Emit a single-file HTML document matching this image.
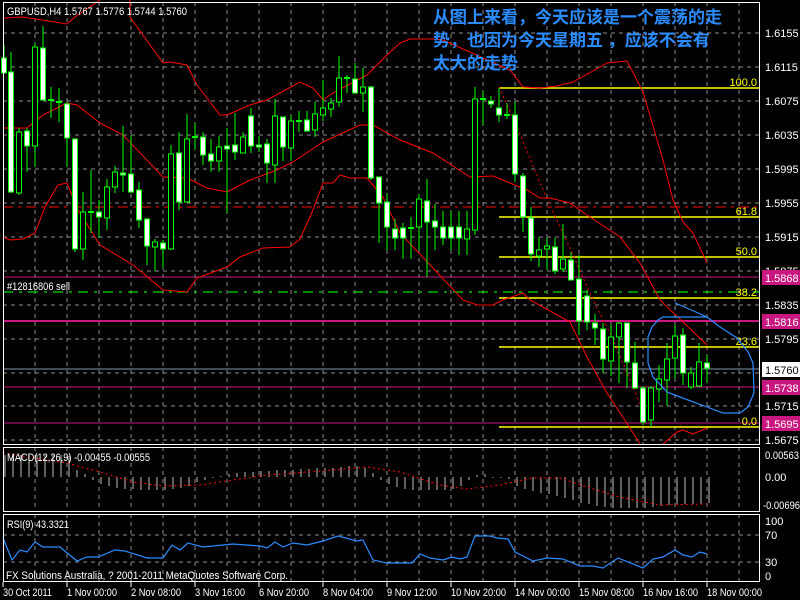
<!DOCTYPE html>
<html><head><meta charset="utf-8"><style>
html,body{margin:0;padding:0;background:#000;width:800px;height:600px;overflow:hidden}
svg{display:block}
text{font-family:"Liberation Sans",sans-serif;font-size:11px;fill:#fff}
.cn{font-family:"Liberation Sans","Noto Sans CJK SC",sans-serif;font-size:17px;font-weight:bold;fill:#2a8cff}
.g{stroke:#8c8c8c;stroke-width:1;stroke-dasharray:4,4;fill:none}
.y{stroke:#ffff00;stroke-width:1.5}
.yt{fill:#ffff00;text-anchor:end}
.m{stroke:#c8177f}
.w line{stroke:#00ff00;stroke-width:1}
.w rect{stroke:#00ff00;stroke-width:1}
</style></head><body>
<svg width="800" height="600" viewBox="0 0 800 600" xmlns="http://www.w3.org/2000/svg">
<g class="g">
<path d="M35 2V445M67 2V445M99 2V445M131 2V445M163 2V445M195 2V445M227 2V445M259 2V445M291 2V445M323 2V445M355 2V445M387 2V445M419 2V445M451 2V445M483 2V445M515 2V445M547 2V445M579 2V445M611 2V445M643 2V445M675 2V445M707 2V445M739 2V445"/>
<path d="M35 447V512M67 447V512M99 447V512M131 447V512M163 447V512M195 447V512M227 447V512M259 447V512M291 447V512M323 447V512M355 447V512M387 447V512M419 447V512M451 447V512M483 447V512M515 447V512M547 447V512M579 447V512M611 447V512M643 447V512M675 447V512M707 447V512M739 447V512"/>
<path d="M35 514V582M67 514V582M99 514V582M131 514V582M163 514V582M195 514V582M227 514V582M259 514V582M291 514V582M323 514V582M355 514V582M387 514V582M419 514V582M451 514V582M483 514V582M515 514V582M547 514V582M579 514V582M611 514V582M643 514V582M675 514V582M707 514V582M739 514V582"/>
<path d="M3 33H760M3 67H760M3 101H760M3 135H760M3 169H760M3 203H760M3 237H760M3 271H760M3 305H760M3 339H760M3 373H760M3 406H760M3 440H760"/>
<path d="M3 535H760M3 562H760"/>
</g>
<line x1="3" y1="207" x2="760" y2="207" stroke="#ff0000" stroke-dasharray="10,5,3,5"/>
<line x1="3" y1="277" x2="760" y2="277" class="m" stroke-width="1"/>
<line x1="3" y1="292" x2="760" y2="292" stroke="#00dd00" stroke-width="1.2" stroke-dasharray="10,6,3,6"/>
<line x1="3" y1="321" x2="760" y2="321" class="m" stroke-width="2"/>
<line x1="3" y1="369" x2="760" y2="369" stroke="#7f96aa"/>
<line x1="3" y1="387" x2="760" y2="387" class="m"/>
<line x1="3" y1="423" x2="760" y2="423" class="m"/>
<g class="y">
<line x1="499" y1="88" x2="760" y2="88"/><line x1="499" y1="217" x2="760" y2="217"/><line x1="499" y1="257" x2="760" y2="257"/><line x1="499" y1="298" x2="760" y2="298"/><line x1="499" y1="347" x2="760" y2="347"/><line x1="499" y1="427" x2="760" y2="427"/>
</g>
<text class="yt" x="757" y="86">100.0</text><text class="yt" x="757" y="215">61.8</text><text class="yt" x="757" y="255">50.0</text><text class="yt" x="757" y="296">38.2</text><text class="yt" x="757" y="345">23.6</text><text class="yt" x="757" y="425">0.0</text>
<g fill="none" stroke="#ff0000" stroke-width="1">
<polyline points="3,18 23,17 67,24 75,17 100,0"/>
<polyline points="130,0 130,17 163,63 170,62 187,65 197,85 220,115 227,115 250,105 267,100 300,82 313,88 323,100 333,93 367,75 387,55 400,43 410,39 433,39 443,40 510,70 523,87 540,88 557,86 573,82 600,67 607,63 627,61 643,92 663,160 673,200 683,222 693,233 707,263"/>
<polyline points="3,128 27,128 43,115 67,103 77,105 100,123 123,135 163,177 187,178 207,188 227,192 250,180 277,170 293,162 323,142 360,125 373,125 400,140 433,153 470,177 493,176 527,190 540,198 550,198 570,203 587,215 620,237 640,263 660,300 707,345"/>
<polyline points="3,237 10,240 23,239 35,233 45,207 58,185 67,183 78,210 100,245 133,265 163,290 187,292 197,278 227,267 240,257 263,248 290,247 300,239 313,210 323,183 333,183 340,175 350,178 367,178 383,197 400,233 463,300 477,305 493,305 503,300 523,293 530,300 570,322 587,357 607,393 630,428 640,444"/>
<polyline points="663,444 677,432 683,430 693,434 707,428"/>
<polyline points="499,87 515,122 543,190 570,248 593,300 610,333 645,415" stroke-dasharray="2,3"/>
</g>
<g class="w">
<line x1="4" y1="45" x2="4" y2="73"/><line x1="11" y1="52" x2="11" y2="193"/><line x1="19" y1="128" x2="19" y2="195"/><line x1="27" y1="128" x2="27" y2="172"/><line x1="35" y1="43" x2="35" y2="167"/><line x1="43" y1="26" x2="43" y2="100"/><line x1="51" y1="87" x2="51" y2="118"/><line x1="59" y1="88" x2="59" y2="122"/><line x1="67" y1="102" x2="67" y2="167"/><line x1="75" y1="138" x2="75" y2="252"/><line x1="83" y1="192" x2="83" y2="260"/><line x1="91" y1="170" x2="91" y2="233"/><line x1="99" y1="200" x2="99" y2="238"/><line x1="107" y1="179" x2="107" y2="230"/><line x1="115" y1="166" x2="115" y2="193"/><line x1="123" y1="126" x2="123" y2="192"/><line x1="131" y1="135" x2="131" y2="193"/><line x1="139" y1="182" x2="139" y2="228"/><line x1="147" y1="218" x2="147" y2="265"/><line x1="155" y1="239" x2="155" y2="271"/><line x1="163" y1="240" x2="163" y2="268"/><line x1="171" y1="145" x2="171" y2="250"/><line x1="179" y1="132" x2="179" y2="210"/><line x1="187" y1="114" x2="187" y2="203"/><line x1="195" y1="123" x2="195" y2="150"/><line x1="203" y1="132" x2="203" y2="165"/><line x1="211" y1="139" x2="211" y2="172"/><line x1="219" y1="136" x2="219" y2="172"/><line x1="227" y1="128" x2="227" y2="213"/><line x1="235" y1="113" x2="235" y2="160"/><line x1="243" y1="132" x2="243" y2="153"/><line x1="251" y1="108" x2="251" y2="153"/><line x1="259" y1="136" x2="259" y2="152"/><line x1="267" y1="139" x2="267" y2="183"/><line x1="275" y1="99" x2="275" y2="183"/><line x1="283" y1="117" x2="283" y2="161"/><line x1="291" y1="115" x2="291" y2="161"/><line x1="299" y1="111" x2="299" y2="132"/><line x1="307" y1="111" x2="307" y2="132"/><line x1="315" y1="102" x2="315" y2="137"/><line x1="323" y1="80" x2="323" y2="121"/><line x1="331" y1="98" x2="331" y2="117"/><line x1="339" y1="56" x2="339" y2="107"/><line x1="347" y1="75" x2="347" y2="93"/><line x1="355" y1="63" x2="355" y2="94"/><line x1="363" y1="68" x2="363" y2="112"/><line x1="371" y1="86" x2="371" y2="180"/><line x1="379" y1="177" x2="379" y2="243"/><line x1="387" y1="193" x2="387" y2="250"/><line x1="395" y1="219" x2="395" y2="250"/><line x1="403" y1="223" x2="403" y2="259"/><line x1="411" y1="217" x2="411" y2="259"/><line x1="419" y1="194" x2="419" y2="250"/><line x1="427" y1="179" x2="427" y2="277"/><line x1="435" y1="204" x2="435" y2="250"/><line x1="443" y1="211" x2="443" y2="245"/><line x1="451" y1="211" x2="451" y2="250"/><line x1="459" y1="211" x2="459" y2="255"/><line x1="467" y1="211" x2="467" y2="255"/><line x1="475" y1="87" x2="475" y2="235"/><line x1="483" y1="91" x2="483" y2="125"/><line x1="491" y1="96" x2="491" y2="108"/><line x1="499" y1="88" x2="499" y2="122"/><line x1="507" y1="103" x2="507" y2="119"/><line x1="515" y1="102" x2="515" y2="182"/><line x1="523" y1="173" x2="523" y2="232"/><line x1="531" y1="207" x2="531" y2="261"/><line x1="539" y1="237" x2="539" y2="267"/><line x1="547" y1="238" x2="547" y2="270"/><line x1="555" y1="238" x2="555" y2="274"/><line x1="563" y1="224" x2="563" y2="272"/><line x1="571" y1="252" x2="571" y2="280"/><line x1="579" y1="255" x2="579" y2="335"/><line x1="587" y1="290" x2="587" y2="330"/><line x1="595" y1="314" x2="595" y2="345"/><line x1="603" y1="323" x2="603" y2="373"/><line x1="611" y1="325" x2="611" y2="376"/><line x1="619" y1="322" x2="619" y2="383"/><line x1="627" y1="323" x2="627" y2="388"/><line x1="635" y1="342" x2="635" y2="389"/><line x1="643" y1="386" x2="643" y2="425"/><line x1="651" y1="386" x2="651" y2="427"/><line x1="659" y1="365" x2="659" y2="402"/><line x1="667" y1="343" x2="667" y2="406"/><line x1="675" y1="325" x2="675" y2="378"/><line x1="683" y1="328" x2="683" y2="385"/><line x1="691" y1="367" x2="691" y2="389"/><line x1="699" y1="343" x2="699" y2="387"/><line x1="707" y1="355" x2="707" y2="383"/>
<g fill="#fff">
<rect x="1.5" y="58" width="5" height="15"/><rect x="8.5" y="72" width="5" height="120"/><rect x="24.5" y="131" width="5" height="15"/><rect x="40.5" y="48" width="5" height="52"/><rect x="64.5" y="104" width="5" height="34"/><rect x="72.5" y="139" width="5" height="110"/><rect x="96.5" y="212" width="5" height="5"/><rect x="120.5" y="173" width="5" height="2"/><rect x="128.5" y="174" width="5" height="18"/><rect x="136.5" y="190" width="5" height="30"/><rect x="144.5" y="219" width="5" height="27"/><rect x="160.5" y="243" width="5" height="6"/><rect x="176.5" y="153" width="5" height="49"/><rect x="200.5" y="137" width="5" height="18"/><rect x="208.5" y="154" width="5" height="7"/><rect x="224.5" y="146" width="5" height="3"/><rect x="232.5" y="145" width="5" height="7"/><rect x="248.5" y="116" width="5" height="30"/><rect x="256.5" y="145" width="5" height="2"/><rect x="264.5" y="144" width="5" height="19"/><rect x="280.5" y="117" width="5" height="30"/><rect x="304.5" y="120" width="5" height="11"/><rect x="352.5" y="79" width="5" height="14"/><rect x="368.5" y="87" width="5" height="91"/><rect x="376.5" y="177" width="5" height="26"/><rect x="384.5" y="202" width="5" height="25"/><rect x="392.5" y="229" width="5" height="9"/><rect x="400.5" y="228" width="5" height="10"/><rect x="424.5" y="201" width="5" height="21"/><rect x="432.5" y="221" width="5" height="6"/><rect x="440.5" y="227" width="5" height="11"/><rect x="448.5" y="227" width="5" height="11"/><rect x="456.5" y="227" width="5" height="11"/><rect x="488.5" y="101" width="5" height="3"/><rect x="496.5" y="108" width="5" height="7"/><rect x="512.5" y="115" width="5" height="59"/><rect x="520.5" y="176" width="5" height="41"/><rect x="528.5" y="218" width="5" height="36"/><rect x="552.5" y="247" width="5" height="24"/><rect x="568.5" y="260" width="5" height="20"/><rect x="576.5" y="279" width="5" height="42"/><rect x="584.5" y="296" width="5" height="26"/><rect x="592.5" y="323" width="5" height="5"/><rect x="600.5" y="329" width="5" height="30"/><rect x="624.5" y="323" width="5" height="39"/><rect x="632.5" y="363" width="5" height="25"/><rect x="640.5" y="388" width="5" height="34"/><rect x="680.5" y="335" width="5" height="38"/><rect x="704.5" y="363" width="5" height="5"/>
</g>
<g fill="#000">
<rect x="16.5" y="132" width="5" height="61"/><rect x="32.5" y="47" width="5" height="99"/><rect x="80.5" y="212" width="5" height="37"/><rect x="104.5" y="187" width="5" height="31"/><rect x="112.5" y="172" width="5" height="15"/><rect x="152.5" y="242" width="5" height="5"/><rect x="168.5" y="154" width="5" height="95"/><rect x="184.5" y="139" width="5" height="63"/><rect x="216.5" y="147" width="5" height="14"/><rect x="240.5" y="137" width="5" height="16"/><rect x="272.5" y="116" width="5" height="49"/><rect x="288.5" y="121" width="5" height="27"/><rect x="312.5" y="114" width="5" height="16"/><rect x="320.5" y="108" width="5" height="7"/><rect x="328.5" y="103" width="5" height="6"/><rect x="336.5" y="78" width="5" height="24"/><rect x="360.5" y="87" width="5" height="6"/><rect x="416.5" y="199" width="5" height="28"/><rect x="464.5" y="229" width="5" height="10"/><rect x="472.5" y="99" width="5" height="131"/><rect x="536.5" y="250" width="5" height="6"/><rect x="544.5" y="246" width="5" height="3"/><rect x="560.5" y="259" width="5" height="10"/><rect x="608.5" y="337" width="5" height="24"/><rect x="616.5" y="323" width="5" height="14"/><rect x="648.5" y="388" width="5" height="32"/><rect x="656.5" y="379" width="5" height="10"/><rect x="664.5" y="359" width="5" height="21"/><rect x="672.5" y="336" width="5" height="22"/><rect x="688.5" y="373" width="5" height="14"/><rect x="696.5" y="362" width="5" height="24"/>
</g>
<path d="M48 100H54M56 102H62M88 212H94M192 137H198M296 121H302M344 78H350M408 228H414M480 99H486M504 115H510" stroke="#00ff00" stroke-width="2"/>
</g>
<path d="M675,303 L680,305 707,317 720,327 737,338 748,352 753,363 754,393 748,407 740,413 723,413 707,407 680,397 667,392 653,377 648,363 648,337 652,327 658,320 663,317 707,317" fill="none" stroke="#2a8cff" stroke-width="1.2"/>
<path d="M5 455V477M13 455V477M21 455V477M29 455V477M37 455V477M45 455V477M53 455V477M61 455V477M69 456V477M77 470V477M85 474V477M93 477V480M101 477V484M109 477V486M117 477V488M125 477V489M133 477V489M141 477V490M149 477V490M157 477V490M165 477V490M173 477V489M181 477V488M189 477V486M197 477V482M205 477V480M213 477V478M221 476V477M229 474V477M237 473V477M245 472V477M253 472V477M261 471V477M269 471V477M277 470V477M285 470V477M293 470V477M301 469V477M309 469V477M317 468V477M325 468V477M333 468V477M341 467V477M349 466V477M357 466V477M365 468V477M373 473V477M381 477V480M389 477V484M397 477V487M405 477V489M413 477V490M421 477V490M429 477V490M437 477V490M445 477V490M453 477V489M461 477V486M469 477V480M477 475V477M485 474V477M493 477V478M501 477V478M509 477V479M517 477V486M525 477V489M533 477V491M541 477V493M549 477V494M557 477V496M565 477V498M573 477V500M581 477V503M589 477V504M597 477V506M605 477V507M613 477V508M621 477V508M629 477V508M637 477V508M645 477V508M653 477V507M661 477V506M669 477V505M677 477V505M685 477V504M693 477V504M701 477V504M709 477V503" stroke="#c0c0c0" stroke-width="1"/>
<polyline points="3,453 67,463 100,472 133,482 163,486 200,485 233,480 267,475 333,470 367,467 400,472 440,485 467,489 500,485 533,478 560,478 587,487 620,497 660,505 707,504" fill="none" stroke="#ff0000" stroke-dasharray="2,3"/>
<polyline points="3,538 12,560 20,550 27,552 35,542 43,547 60,547 77,561 87,557 98,557 115,550 125,551 147,558 163,558 172,545 180,550 188,543 203,547 233,544 260,546 267,548 275,542 283,547 293,543 307,545 323,541 338,536 357,541 363,540 373,560 387,563 400,563 412,563 420,554 430,558 443,560 452,557 460,559 467,557 475,536 490,536 497,538 508,539 515,552 533,561 547,558 563,559 580,566 593,566 603,568 618,558 643,568 653,559 663,557 675,550 683,555 692,557 700,552 707,554" fill="none" stroke="#2a8cff" stroke-width="1.2"/>
<g fill="none" stroke="#fff" stroke-width="1">
<rect x="3.5" y="2.5" width="756" height="442"/>
<rect x="3.5" y="447.5" width="756" height="64"/>
<rect x="3.5" y="514.5" width="756" height="67"/>
</g>
<path d="M3 582V587M67 582V587M131 582V587M195 582V587M259 582V587M323 582V587M387 582V587M451 582V587M515 582V587M579 582V587M643 582V587M707 582V587" stroke="#fff"/>
<text x="7" y="15" textLength="180" lengthAdjust="spacingAndGlyphs">GBPUSD,H4  1.5767 1.5776 1.5744 1.5760</text>
<text x="7" y="290" textLength="63" lengthAdjust="spacingAndGlyphs">#12816806 sell</text>
<text x="7" y="461" textLength="143" lengthAdjust="spacingAndGlyphs">MACD(12,26,9) -0.00455 -0.00555</text>
<text x="7" y="528" textLength="62" lengthAdjust="spacingAndGlyphs">RSI(9) 43.3321</text>
<text x="6" y="579" textLength="282" lengthAdjust="spacingAndGlyphs">FX Solutions Australia, ? 2001-2011 MetaQuotes Software Corp.</text>
<text class="cn" x="433" y="23">从图上来看，今天应该是一个震荡的走</text>
<text class="cn" x="433" y="46">势，也因为今天星期五 ，应该不会有</text>
<text class="cn" x="433" y="69">太大的走势</text>
<g>
<text x="765" y="37">1.6155</text><text x="765" y="71">1.6115</text><text x="765" y="105">1.6075</text><text x="765" y="139">1.6035</text><text x="765" y="173">1.5995</text><text x="765" y="207">1.5955</text><text x="765" y="241">1.5915</text><text x="765" y="275">1.5875</text><text x="765" y="309">1.5835</text><text x="765" y="343">1.5795</text><text x="765" y="410">1.5715</text><text x="765" y="444">1.5675</text>
</g>
<rect x="762" y="270" width="38" height="15" fill="#c8177f"/><text x="765" y="282">1.5868</text>
<rect x="762" y="314" width="38" height="15" fill="#c8177f"/><text x="765" y="326">1.5816</text>
<rect x="762" y="362" width="38" height="15" fill="#fff"/><text x="765" y="374" style="fill:#000">1.5760</text>
<rect x="762" y="380" width="38" height="15" fill="#c8177f"/><text x="765" y="392">1.5738</text>
<rect x="762" y="416" width="38" height="15" fill="#c8177f"/><text x="765" y="428">1.5695</text>
<text x="765" y="459" textLength="34" lengthAdjust="spacingAndGlyphs">0.00563</text><text x="765" y="481">0.00</text><text x="763" y="509" textLength="37" lengthAdjust="spacingAndGlyphs">-0.00696</text>
<text x="765" y="525">100</text><text x="765" y="539">70</text><text x="765" y="566">30</text><text x="765" y="580">0</text>
<g>
<text x="3" y="596" textLength="49" lengthAdjust="spacingAndGlyphs">30 Oct 2011</text><text x="67" y="596" textLength="50" lengthAdjust="spacingAndGlyphs">1 Nov 00:00</text><text x="131" y="596" textLength="50" lengthAdjust="spacingAndGlyphs">2 Nov 08:00</text><text x="195" y="596" textLength="50" lengthAdjust="spacingAndGlyphs">3 Nov 16:00</text><text x="259" y="596" textLength="50" lengthAdjust="spacingAndGlyphs">6 Nov 20:00</text><text x="323" y="596" textLength="50" lengthAdjust="spacingAndGlyphs">8 Nov 04:00</text><text x="387" y="596" textLength="50" lengthAdjust="spacingAndGlyphs">9 Nov 12:00</text><text x="451" y="596" textLength="55" lengthAdjust="spacingAndGlyphs">10 Nov 20:00</text><text x="515" y="596" textLength="55" lengthAdjust="spacingAndGlyphs">14 Nov 00:00</text><text x="579" y="596" textLength="55" lengthAdjust="spacingAndGlyphs">15 Nov 08:00</text><text x="643" y="596" textLength="55" lengthAdjust="spacingAndGlyphs">16 Nov 16:00</text><text x="707" y="596" textLength="55" lengthAdjust="spacingAndGlyphs">18 Nov 00:00</text>
</g>
</svg>
</body></html>
